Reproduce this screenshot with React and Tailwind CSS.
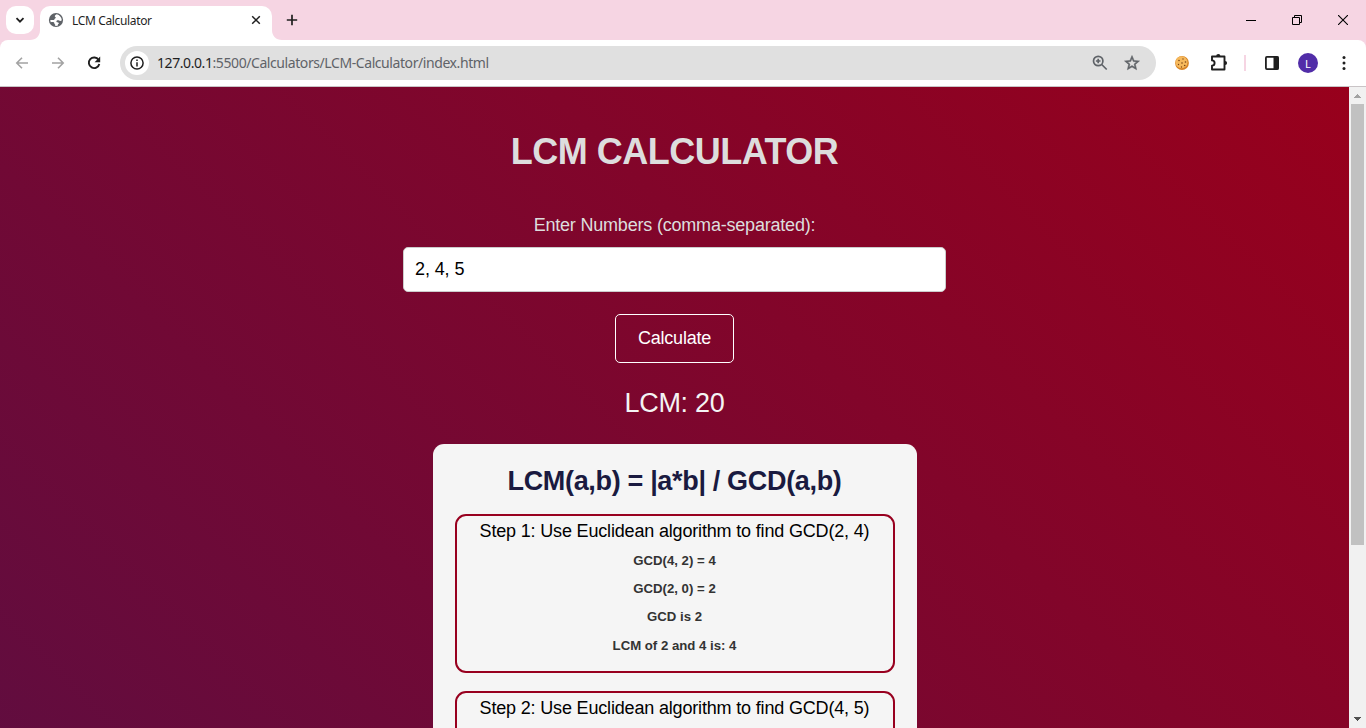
import React from "react";

const UI = "font-['Noto_Sans','Open_Sans',sans-serif]";

function Star() {
  return (
    <svg width="18" height="18" viewBox="0 0 24 24" fill="#5f6368" stroke="#5f6368" strokeWidth=".7">
      <path d="M22 9.24l-7.19-.62L12 2 9.19 8.63 2 9.24l5.46 4.73L5.82 21 12 17.27 18.18 21l-1.63-7.03L22 9.24zM12 15.4l-3.76 2.27 1-4.28-3.32-2.88 4.38-.38L12 6.1l1.71 4.04 4.38.38-3.32 2.88 1 4.28L12 15.4z" />
    </svg>
  );
}

function TabStrip() {
  return (
    <div className="flex h-10 items-stretch bg-[#f6d5e3]">
      <div className="flex w-[34px] items-center pl-1.5">
        <div className="flex h-7 w-7 items-center justify-center rounded-[10px] bg-white">
          <svg width="10" height="10" viewBox="0 0 10 10" fill="none" stroke="#1f1f1f" strokeWidth="1.8">
            <path d="M1.5 3.2L5 6.7l3.500-3.500" />
          </svg>
        </div>
      </div>
      <svg className="mt-auto -ml-[4px]" width="10" height="10" viewBox="0 0 10 10" fill="#fff"><path d="M10 0v10H0C6 10 10 6 10 0z" /></svg>
      <div className="mt-1.5 flex w-[232px] items-center rounded-t-[10px] bg-white pb-1.5 pr-[11px] pl-2">
        <svg width="16" height="16" viewBox="0 0 16 16">
          <circle cx="8" cy="8" r="7.100" fill="#5f6368" />
          <path d="M8.800 2.300c-.7.500-2 .9-2 1.900 0 .8 1 .6 1 1.400 0 .9-1.300.9-1.300 1.600 0 .5-.5.700-1.100.7H2.300c0 .9.200 1.600.5 2.300.9-.1 2.200-.3 3 .1.900.4.200 1.600 1 1.900.7.300.3 1 .3 1.600.9.200 2 0 2.900-.4-.4-.7.100-1.300.6-1.600.7-.4.100-1.300-.5-1.400-.8-.1-1.700.1-1.700-.8s.8-1.400 1.700-1.400c.7 0 1.300.7 2.100.7.600 0 1.200-.3 1.600-.7-.2-2.900-2.200-5.100-5-5.900z" fill="#fff" />
        </svg>
        <span className={`mt-px ml-2 text-[12px] leading-4 tracking-[-0.35px] text-[#1f1f1f] ${UI}`}>LCM Calculator</span>
        <svg className="ml-auto" width="10" height="10" viewBox="0 0 10 10" fill="none" stroke="#1f1f1f" strokeWidth="1.500">
          <path d="M1.200 1.200l7.600 7.600M8.800 1.200L1.200 8.800" />
        </svg>
      </div>
      <svg className="mt-auto" width="10" height="10" viewBox="0 0 10 10" fill="#fff"><path d="M0 0v10h10C4 10 0 6 0 0z" /></svg>
      <svg className="ml-[4px] mt-[14px]" width="12" height="12" viewBox="0 0 12 12" stroke="#1f1f1f" strokeWidth="1.700">
        <path d="M6 .8v10.400M.8 6h10.400" />
      </svg>
      <div className="ml-auto flex items-center pr-[18px]">
        <svg width="10" height="10" viewBox="0 0 10 10" fill="#000"><path d="M0 5h10v1H0z" /></svg>
        <svg className="ml-[36px]" width="10" height="10" viewBox="0 0 10 10" fill="none" stroke="#000">
          <path d="M.5 2.500h7v7h-7zM2.500 2V.5h7v7H8" />
        </svg>
        <svg className="ml-[36px]" width="10" height="10" viewBox="0 0 10 10" fill="none" stroke="#000" strokeWidth="1.100">
          <path d="M0 0l10 10M10 0L0 10" />
        </svg>
      </div>
    </div>
  );
}

function Toolbar() {
  return (
    <div className="bg-[#f6d5e3]">
      <div className="flex h-[47px] items-center rounded-t-[8px] border-b border-[#c9c4c6] bg-white pl-3.5">
        <svg width="16" height="16" viewBox="0 0 16 16" fill="none" stroke="#a3a3a3" strokeWidth="1.600">
          <path d="M14 8H3M8 2.800L2.800 8 8 13.200" />
        </svg>
        <svg className="ml-5" width="16" height="16" viewBox="0 0 16 16" fill="none" stroke="#a3a3a3" strokeWidth="1.600">
          <path d="M2 8h11M8 2.800L13.200 8 8 13.200" />
        </svg>
        <svg className="ml-5" width="16" height="16" viewBox="0 0 16 16">
          <path d="M12.600 4.900A5.300 5.300 0 1 0 13.300 9" fill="none" stroke="#1f1f1f" strokeWidth="1.900" />
          <path d="M14.200 1.600v5.600H8.600z" fill="#1f1f1f" />
        </svg>
        <div className="ml-[18px] flex h-[34px] w-[1036px] items-center rounded-full bg-[#e0e0e0] pl-[5px]">
          <div className="flex h-6 w-6 items-center justify-center rounded-full bg-white">
            <svg width="14" height="14" viewBox="0 0 14 14">
              <circle cx="7" cy="7" r="6.100" fill="none" stroke="#1f1f1f" strokeWidth="1.500" />
              <path d="M6.250 6.200h1.500v4.200h-1.500zM6.250 3.600h1.500v1.500h-1.500z" fill="#1f1f1f" />
            </svg>
          </div>
          <span className={`ml-2 text-[14px] leading-5 tracking-[-0.42px] text-[#5f6368] ${UI}`}>
            <span className="text-[#1f1f1f]">127.0.0.1</span>:5500/Calculators/LCM-Calculator/index.html
          </span>
          <svg className="ml-auto" width="18" height="18" viewBox="0 0 18 18" fill="none" stroke="#5f6368" strokeWidth="1.700">
            <circle cx="7.200" cy="7" r="4.700" />
            <path d="M10.700 10.500l5 5M4.900 7h4.600M7.200 4.700v4.600" />
          </svg>
          <div className="mr-[15px] ml-[14px]"><Star /></div>
        </div>
        <svg className="ml-[19px]" width="14" height="14" viewBox="0 0 14 14">
          <circle cx="7" cy="7" r="6.900" fill="#d78426" />
          <circle cx="6.500" cy="6.300" r="6" fill="#f6b95c" />
          <g fill="#7b4417">
            <circle cx="4" cy="4.500" r=".8" /><circle cx="8" cy="3" r=".7" /><circle cx="7" cy="7" r=".8" />
            <circle cx="10.500" cy="6" r=".8" /><circle cx="3.500" cy="8.500" r=".7" /><circle cx="6.500" cy="11" r=".7" /><circle cx="9.700" cy="9.500" r=".8" />
          </g>
        </svg>
        <svg className="ml-[20px]" width="20" height="20" viewBox="0 0 20 20">
          <path d="M3 3.500h12.500v13H3v-3.900a2.600 2.600 0 0 0 0-5.200z" fill="none" stroke="#1f1f1f" strokeWidth="1.900" strokeLinejoin="round" />
          <path d="M7.200 3a2.100 2.100 0 0 1 4.200 0zM16 7.900a2.100 2.100 0 0 1 0 4.200z" fill="#1f1f1f" />
        </svg>
        <div className="ml-[15px] h-4 w-0.5 bg-[#f6d5e3]" />
        <svg className="ml-[18px]" width="16" height="16" viewBox="0 0 16 16">
          <rect x="1.900" y="1.900" width="12.200" height="12.200" rx="1" fill="none" stroke="#1f1f1f" strokeWidth="1.800" />
          <path d="M9.500 1.500h5v13h-5z" fill="#1f1f1f" />
        </svg>
        <div className={`ml-[18px] flex h-5 w-5 items-center justify-center rounded-full bg-[#512da8] text-[11px] leading-none text-white ${UI}`}>L</div>
        <svg className="ml-[24px]" width="4" height="16" viewBox="0 0 4 16" fill="#1f1f1f">
          <circle cx="2" cy="2.500" r="1.500" /><circle cx="2" cy="8" r="1.500" /><circle cx="2" cy="13.500" r="1.500" />
        </svg>
      </div>
    </div>
  );
}

function Step({ title, lines }) {
  return (
    <div className="mb-[18px] h-[159px] shrink-0 rounded-[11px] border-2 border-[#98001f] pt-[5px] text-center">
      <p className="text-[18px] leading-5 tracking-[-0.17px] text-black">{title}</p>
      <div className="mt-[12px] flex flex-col gap-[13.2px]">
        {lines.map((l) => (
          <p key={l} className="text-[13.200px] leading-[15px] font-bold text-[#333333]">{l}</p>
        ))}
      </div>
    </div>
  );
}

function Page() {
  return (
    <main className="flex min-w-0 flex-1 flex-col items-center overflow-hidden bg-[linear-gradient(45deg,#5b0e43,#98001c)] bg-[length:100%_882px] bg-no-repeat font-['Liberation_Sans',Arial,sans-serif]">
      <h1 className="mt-[44px] text-[36px] leading-[42px] font-bold tracking-[-0.5px] text-[#dddddd]">LCM CALCULATOR</h1>
      <label className="mt-[42px] text-[18px] leading-5 tracking-[-0.2px] text-[#dddddd]">Enter Numbers (comma-separated):</label>
      <input
        className="mt-[12px] h-[45px] w-[543px] shrink-0 rounded-[5px] border border-[#cccccc] bg-white px-[11px] text-[18px] tracking-[-0.1px] text-black"
        defaultValue="2, 4, 5"
      />
      <button className="mt-[22px] h-[49px] w-[119px] shrink-0 rounded-[5px] border border-white text-[18px] tracking-[-0.2px] text-white">Calculate</button>
      <p className="mt-[24px] text-[27px] leading-8 tracking-[-0.3px] text-[#f4f4f4]">LCM: 20</p>
      <section className="mt-[25px] flex w-[484px] flex-1 flex-col overflow-hidden rounded-t-[11px] bg-[#f5f5f5] px-[22px]">
        <h2 className="mt-[21px] mb-[17px] text-center text-[27px] leading-8 font-bold tracking-[-0.33px] text-[#1a1a40]">LCM(a,b) = |a*b| / GCD(a,b)</h2>
        <Step
          title="Step 1: Use Euclidean algorithm to find GCD(2, 4)"
          lines={["GCD(4, 2) = 4", "GCD(2, 0) = 2", "GCD is 2", "LCM of 2 and 4 is: 4"]}
        />
        <Step title="Step 2: Use Euclidean algorithm to find GCD(4, 5)" lines={[]} />
      </section>
    </main>
  );
}

function Scrollbar() {
  return (
    <div className="flex w-[17px] flex-col items-center bg-[#f1f1f1]">
      <svg width="17" height="17" viewBox="0 0 17 17" fill="#a3a3a3" shapeRendering="crispEdges"><path d="M5 11h7L8.500 7z" /></svg>
      <div className="h-[441px] w-[13px] bg-[#c1c1c1]" />
      <svg className="mt-auto" width="17" height="17" viewBox="0 0 17 17" fill="#505050" shapeRendering="crispEdges"><path d="M5 6h7l-3.500 4z" /></svg>
    </div>
  );
}

export default function App() {
  return (
    <div className="flex h-[728px] w-[1366px] flex-col overflow-hidden">
      <TabStrip />
      <Toolbar />
      <div className="flex min-h-0 flex-1">
        <Page />
        <Scrollbar />
      </div>
    </div>
  );
}
